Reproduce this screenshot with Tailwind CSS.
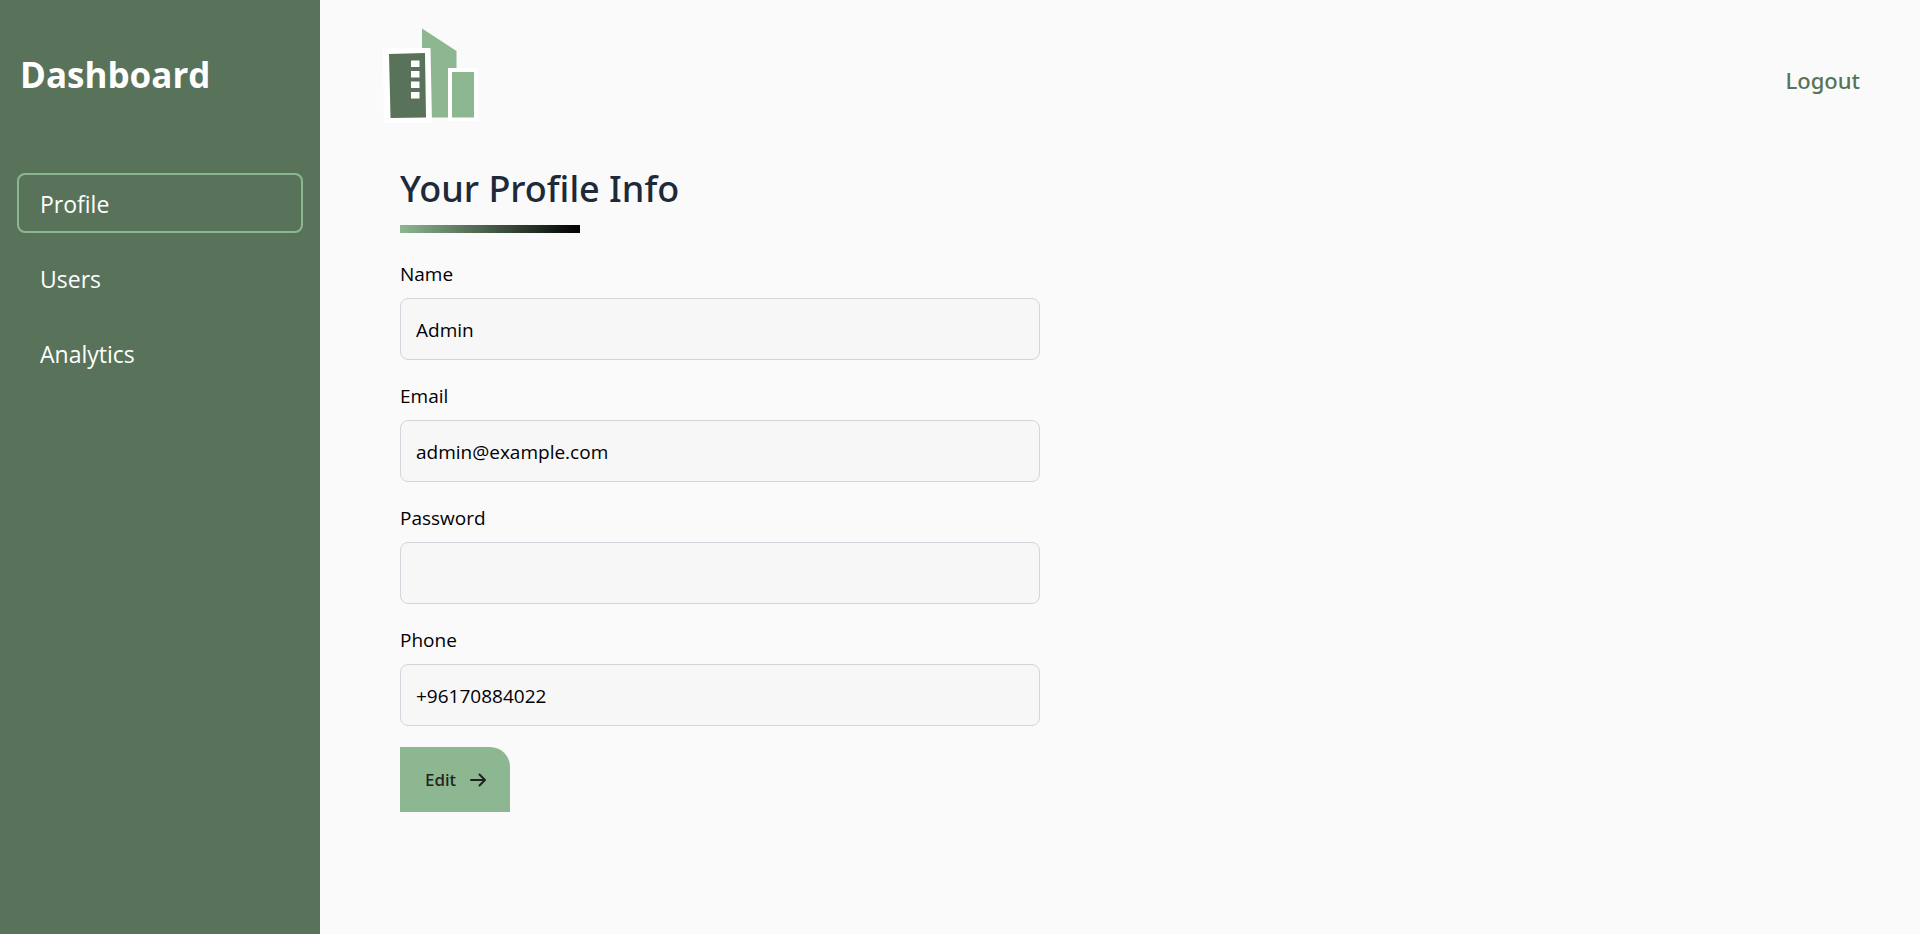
<!DOCTYPE html>
<html lang="en">
<head>
<meta charset="utf-8">
<meta name="viewport" content="width=device-width, initial-scale=1">
<title>Dashboard</title>
<script src="https://cdn.jsdelivr.net/npm/@tailwindcss/browser@4"></script>
</head>
<body class="flex min-h-screen bg-[#fafafa] font-['Open_Sans','Noto_Sans',sans-serif] text-black">
  <aside class="flex w-80 shrink-0 flex-col bg-[#587359] px-[17px] pt-[50px] text-white">
    <h1 class="px-[3px] text-[35px] leading-[50px] font-bold">Dashboard</h1>
    <nav class="mt-[73px] flex flex-col gap-[15px] text-[23px]">
      <a href="#" aria-current="page" class="flex h-[60px] items-center rounded-lg border-2 border-[#8db790] px-[21px] pt-[2px]">Profile</a>
      <a href="#" class="flex h-[60px] items-center rounded-lg px-[23px] pt-[2px]">Users</a>
      <a href="#" class="flex h-[60px] items-center rounded-lg px-[23px] pt-[2px]">Analytics</a>
    </nav>
  </aside>
  <div class="min-w-0 flex-1">
    <header class="flex items-center justify-between pt-6 pr-[60px] pl-[60px]">
      <a href="#" aria-label="Home">
        <svg class="size-[104px]" viewBox="0 0 104 104" aria-hidden="true">
          <path d="M42 4.500 76.500 27V93.500H42Z" fill="#8db790"/>
          <path d="M3 24H50.500L52 99H4Z" fill="#fff"/>
          <path d="M9 30 45 29 46 93.500 10.500 94Z" fill="#587359"/>
          <path d="M31 36.500h8.500v6.500H31ZM31 47h8.500v6.500H31ZM31 57.500h8.500V64H31ZM31 68h8.500v6.500H31Z" fill="#fff"/>
          <path d="M68 44H98V97H68Z" fill="#fff"/>
          <path d="M72 48H94V93.500H72Z" fill="#8db790"/>
        </svg>
      </a>
      <button type="button" class="mt-2 font-['Noto_Sans',sans-serif] text-[22px] leading-8 font-medium text-[#587359]">Logout</button>
    </header>
    <main class="px-20 pt-9">
      <h2 class="font-['Noto_Sans',sans-serif] text-[36px] leading-[50px] font-medium text-gray-800">Your Profile Info</h2>
      <div class="mt-[11px] h-2 w-[180px] bg-linear-to-r/srgb from-[#8db790] to-black"></div>
      <form class="mt-[26px] flex w-[640px] max-w-full flex-col gap-[21px] text-[19px]">
        <div class="flex flex-col gap-[9px]">
          <label for="name" class="leading-[30px]">Name</label>
          <input id="name" type="text" value="Admin" class="h-[62px] w-full rounded-lg border border-gray-300 bg-[#f7f7f7] px-[15px] pt-[2px]">
        </div>
        <div class="flex flex-col gap-[9px]">
          <label for="email" class="leading-[30px]">Email</label>
          <input id="email" type="email" value="admin@example.com" class="h-[62px] w-full rounded-lg border border-gray-300 bg-[#f7f7f7] px-[15px] pt-[2px]">
        </div>
        <div class="flex flex-col gap-[9px]">
          <label for="password" class="leading-[30px]">Password</label>
          <input id="password" type="password" class="h-[62px] w-full rounded-lg border border-gray-300 bg-[#f7f7f7] px-[15px] pt-[2px]">
        </div>
        <div class="flex flex-col gap-[9px]">
          <label for="phone" class="leading-[30px]">Phone</label>
          <input id="phone" type="tel" value="+96170884022" class="h-[62px] w-full rounded-lg border border-gray-300 bg-[#f7f7f7] px-[15px] pt-[2px]">
        </div>
        <button type="button" class="flex h-[65px] w-[110px] items-center justify-between self-start rounded-tr-[20px] bg-[#8db790] pr-[23px] pl-[25px] font-['Noto_Sans',sans-serif] text-[17px] font-medium text-[#222]">
          Edit
          <svg class="h-4 w-[18px]" viewBox="0 0 18 16" fill="none" stroke="currentColor" stroke-width="2" stroke-linecap="round" stroke-linejoin="round" aria-hidden="true"><path d="M2 8H16M10.500 2.500 16 8 10.500 13.500"/></svg>
        </button>
      </form>
    </main>
  </div>
</body>
</html>
